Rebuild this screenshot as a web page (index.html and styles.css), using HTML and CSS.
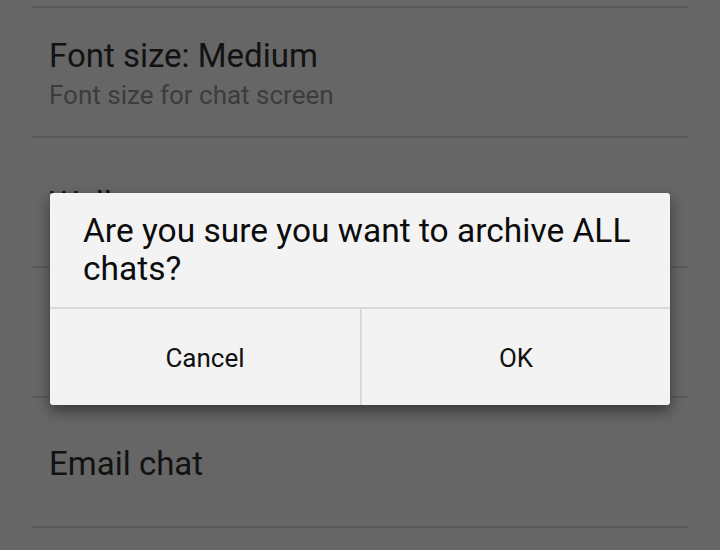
FILE: index.html
```html
<!DOCTYPE html>
<html>
<head>
<meta charset="utf-8">
<link rel="stylesheet" href="styles.css">
</head>
<body>
<div class="screen">
  <div class="list">
    <div class="row row-top"></div>
    <div class="row row-two">
      <div class="title">Font size: Medium</div>
      <div class="sub">Font size for chat screen</div>
    </div>
    <div class="row">
      <div class="title">Wallpaper</div>
    </div>
    <div class="row"></div>
    <div class="row">
      <div class="title">Email chat</div>
    </div>
  </div>
  <div class="dialog">
    <div class="message">Are you sure you want to archive ALL chats?</div>
    <div class="buttons">
      <div class="btn">Cancel</div>
      <div class="btn">OK</div>
    </div>
  </div>
</div>
</body>
</html>
```
FILE: styles.css
```css
html, body {
  margin: 0;
  padding: 0;
  background: #666666;
}
.screen {
  position: relative;
  width: 720px;
  height: 550px;
  overflow: hidden;
  font-family: Roboto, "Noto Sans", sans-serif;
}
.list {
  display: flex;
  flex-direction: column;
  padding: 0 32px;
}
.row {
  box-sizing: border-box;
  height: 130px;
  border-bottom: 2px solid #5a5a5a;
  display: flex;
  flex-direction: column;
  justify-content: center;
  padding-left: 17px;
  padding-top: 4px;
}
.row-two {
  padding-top: 4px;
}
.row-top {
  height: 8px;
  padding-top: 0;
}
.title {
  font-size: 33px;
  color: #121212;
  line-height: 40px;
}
.sub {
  font-size: 26px;
  color: #3c3c3c;
  line-height: 34px;
  margin-top: 2px;
}
.dialog {
  position: absolute;
  left: 50px;
  top: 193px;
  width: 620px;
  height: 212px;
  background: #f3f3f3;
  border-radius: 3px;
  box-shadow: 0 6px 14px rgba(0,0,0,0.45);
  display: flex;
  flex-direction: column;
}
.message {
  box-sizing: border-box;
  height: 116px;
  padding: 19px 28px 0 33px;
  font-size: 33.5px;
  line-height: 38px;
  color: #0c0c0c;
  border-bottom: 2px solid #d9d9d9;
}
.buttons {
  flex: 1;
  display: grid;
  grid-template-columns: 1fr 1fr;
}
.btn {
  display: flex;
  align-items: center;
  justify-content: center;
  font-size: 26px;
  color: #111;
  padding-top: 2px;
}
.btn + .btn {
  border-left: 2px solid #d9d9d9;
}
```
